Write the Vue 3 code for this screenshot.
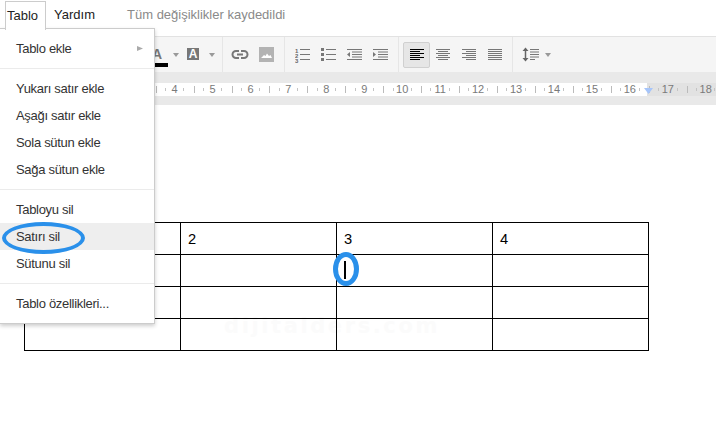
<script setup>
const menuGroups = [
  [{ label: 'Tablo ekle', sub: true }],
  [{ label: 'Yukarı satır ekle' }, { label: 'Aşağı satır ekle' }, { label: 'Sola sütun ekle' }, { label: 'Sağa sütun ekle' }],
  [{ label: 'Tabloyu sil' }, { label: 'Satırı sil', hover: true }, { label: 'Sütunu sil' }],
  [{ label: 'Tablo özellikleri...' }],
]
const rulerNumbers = Array.from({ length: 15 }, (_, i) => i + 4)
const rows = [['', '2', '3', '4'], ['', '', '', ''], ['', '', '', ''], ['', '', '', '']]
const ys = [2.5, 4.5, 6.5, 8.5, 10.5, 12.5]
const lineSets = {
  left: { color: '#000', d: ys.map((y, i) => `M1 ${y}h${i % 2 ? 10 : 14}`).join('') },
  center: { color: '#777', d: ys.map((y, i) => (i % 2 ? `M3 ${y}h10` : `M1 ${y}h14`)).join('') },
  right: { color: '#777', d: ys.map((y, i) => (i % 2 ? `M5 ${y}h10` : `M1 ${y}h14`)).join('') },
  justify: { color: '#777', d: ys.map((y) => `M1 ${y}h14`).join('') },
}
</script>

<template>
  <div class="page">
    <div class="menubar">
      <div class="tab">Tablo</div>
      <div class="menubar-item">Yardım</div>
      <div class="status">Tüm değişiklikler kaydedildi</div>
    </div>

    <div class="toolbar">
      <div class="group g1">
        <div class="text-color">A</div>
        <i class="caret"></i>
        <div class="highlight">A</div>
        <i class="caret"></i>
      </div>
      <div class="group g2">
        <svg width="18" height="16" viewBox="0 0 18 16" fill="none" stroke="#777" stroke-width="2">
          <path d="M8 4H5a3.5 3.5 0 0 0 0 7h3M10 4h3a3.5 3.5 0 0 1 0 7h-3M6 7.5h6" />
        </svg>
        <svg width="15" height="15" viewBox="0 0 15 15">
          <rect width="15" height="15" fill="#b3b3b3" />
          <path d="M2 11l3-3 1.5 1L8 6.5 10 9l1.5-1L13 11z" fill="#fff" />
        </svg>
      </div>
      <div class="group g3">
        <svg width="15" height="16" viewBox="0 0 15 16">
          <text x="0" y="6" class="num">1</text>
          <text x="0" y="11" class="num">2</text>
          <text x="0" y="16" class="num">3</text>
          <path d="M5 2.5h10M5 7.5h10M5 12.5h10" stroke="#777" fill="none" />
        </svg>
        <svg width="15" height="16" viewBox="0 0 15 16">
          <path d="M0 1h3v3H0zM0 6h3v3H0zM0 11h3v3H0z" fill="#777" />
          <path d="M5 2.5h10M5 7.5h10M5 12.5h10" stroke="#777" fill="none" />
        </svg>
        <svg width="15" height="16" viewBox="0 0 15 16">
          <path d="M0 2.5h15M5 5h10M5 7.5h10M5 10h10M0 12.5h15" stroke="#777" fill="none" />
          <path d="M3 5v5L0 7.5z" fill="#777" />
        </svg>
        <svg width="15" height="16" viewBox="0 0 15 16">
          <path d="M0 2.5h15M5 5h10M5 7.5h10M5 10h10M0 12.5h15" stroke="#777" fill="none" />
          <path d="M0 5v5l3-2.500z" fill="#777" />
        </svg>
      </div>
      <div class="group g4">
        <div v-for="(set, name) in lineSets" :key="name" class="align" :class="{ active: name === 'left' }">
          <svg width="16" height="16" viewBox="0 0 16 16" fill="none" :stroke="set.color">
            <path :d="set.d" />
          </svg>
        </div>
      </div>
      <div class="group g5">
        <svg width="17" height="16" viewBox="0 0 17 16">
          <path d="M3.500 3v9" stroke="#666" stroke-width="1.500" fill="none" />
          <path d="M0.500 4l3-3.500 3 3.500zM0.500 11l3 3.500 3-3.500z" fill="#666" />
          <path d="M8 2.500h9M8 5h9M8 7.500h9M8 10h9M8 12.500h5" stroke="#777" fill="none" />
        </svg>
        <i class="caret"></i>
      </div>
    </div>

    <div class="ruler-band">
      <div class="ruler">
        <div v-for="n in rulerNumbers" :key="n" class="ruler-cell">{{ n }}</div>
      </div>
      <svg class="margin-mark" width="9" height="6" viewBox="0 0 9 6"><path d="M0 0h9L4.500 6z" fill="#a6c5fa" /></svg>
    </div>

    <div class="watermark">dijitalders.com</div>

    <div class="doc">
      <table class="sheet">
        <tbody>
          <tr v-for="(row, r) in rows" :key="r">
            <td v-for="(cell, c) in row" :key="c">{{ cell }}</td>
          </tr>
        </tbody>
      </table>
    </div>

    <div class="caret-line"></div>
    <div class="ring ring-cursor"></div>

    <div class="menu">
      <template v-for="(group, g) in menuGroups" :key="g">
        <div v-if="g > 0" class="sep"></div>
        <div v-for="item in group" :key="item.label" class="item" :class="{ hover: item.hover }">
          <span>{{ item.label }}</span>
          <svg v-if="item.sub" width="6" height="5" viewBox="0 0 6 5"><path d="M0 0l6 2.500L0 5z" fill="#aaa" /></svg>
        </div>
      </template>
    </div>
    <div class="ring ring-menu"></div>
  </div>
</template>

<style scoped>
.page {
  position: relative;
  width: 716px;
  height: 446px;
  overflow: hidden;
  background: #fff;
  font-family: "Liberation Sans", Arial, sans-serif;
  font-size: 13px;
  color: #333;
}
.menubar {
  display: flex;
  height: 36px;
  padding-left: 5px;
  box-sizing: border-box;
  line-height: 28px;
}
.tab {
  position: relative;
  z-index: 3;
  height: 28px;
  margin-top: 1px;
  padding: 0 7px 0 1px;
  border: 1px solid #ccc;
  border-bottom: 0;
  background: #fff;
  color: #222;
  line-height: 27px;
}
.menubar-item {
  padding: 1px 0 0 8px;
  color: #222;
}
.status {
  margin-left: 32px;
  padding-top: 1px;
  color: #8a8a8a;
}
.toolbar {
  display: flex;
  height: 36px;
  box-sizing: border-box;
  padding-bottom: 1px;
  border-top: 1px solid #e2e2e2;
  background: #f5f5f5;
}
.group {
  display: flex;
  align-items: center;
  height: 35px;
  box-sizing: border-box;
  border-right: 1px solid #e6e6e6;
}
.g1 { width: 223px; padding-left: 152px; }
.g2 { width: 62px; padding-left: 8px; gap: 10px; }
.g3 { width: 114px; padding-left: 10px; gap: 11px; }
.g4 { width: 114px; padding-left: 4px; }
.g5 { padding-left: 9px; border-right: 0; }
.text-color {
  width: 16px;
  height: 20px;
  margin-top: 4px;
  box-sizing: border-box;
  border-bottom: 4px solid #000;
  color: #777;
  font-weight: bold;
  font-size: 14px;
  line-height: 15px;
  text-align: left;
}
.highlight {
  width: 12px;
  height: 12px;
  margin-left: 8px;
  margin-top: -1px;
  background: #777;
  color: #fff;
  font-weight: bold;
  font-size: 12px;
  line-height: 13px;
  text-align: center;
}
.caret {
  display: block;
  width: 0;
  height: 0;
  margin-left: 5px;
  border: 3px solid transparent;
  border-top: 4px solid #999;
  border-bottom: 0;
}
.g1 .caret:nth-child(4) { margin-left: 10px; }
.g5 .caret { margin-left: 6px; }
.num {
  font-size: 6px;
  font-weight: bold;
  fill: #666;
  font-family: "Liberation Sans", Arial, sans-serif;
}
.align {
  display: flex;
  align-items: center;
  justify-content: center;
  width: 26px;
  height: 26px;
  box-sizing: border-box;
}
.align.active {
  background: #e6e6e6;
  border: 1px solid #d0d0d0;
  border-radius: 2px;
  width: 27px;
}
.ruler-band {
  position: relative;
  height: 33px;
  padding-top: 11px;
  box-sizing: border-box;
  background: #e9e9e9;
  overflow: hidden;
}
.ruler {
  display: flex;
  height: 13px;
  padding-left: 155.650px;
  background: linear-gradient(to right, #fff 0, #fff 647px, #e2e2e2 647px);
}
.ruler-cell {
  flex: 0 0 37.950px;
  text-align: center;
  line-height: 13px;
  font-size: 11px;
  color: #7a7a7a;
  background:
    linear-gradient(#bbb, #bbb) 0 center / 1px 7px no-repeat,
    linear-gradient(#c4c4c4, #c4c4c4) 25% center / 1px 3px no-repeat,
    linear-gradient(#c4c4c4, #c4c4c4) 75% center / 1px 3px no-repeat;
}
.margin-mark {
  position: absolute;
  left: 644px;
  top: 16px;
}
.doc {
  position: relative;
  padding: 117px 0 0 24px;
}
.sheet {
  width: 625px;
  table-layout: fixed;
  border-collapse: collapse;
  font-size: 14.670px;
  color: #000;
}
.sheet td {
  height: 32px;
  box-sizing: border-box;
  padding: 0 7px;
  border: 1px solid #000;
}
.watermark {
  position: absolute;
  left: 224px;
  top: 314px;
  font-family: "DejaVu Sans", sans-serif;
  font-size: 21px;
  font-weight: bold;
  letter-spacing: 2.600px;
  color: #fbfbfb;
}
.caret-line {
  position: absolute;
  left: 344px;
  top: 261px;
  width: 2px;
  height: 18px;
  background: #000;
}
.ring {
  position: absolute;
  box-sizing: border-box;
  border: 4px solid #2a90ea;
  border-radius: 50%;
  z-index: 5;
}
.ring-menu {
  left: 2px;
  top: 222px;
  width: 83px;
  height: 32px;
}
.ring-cursor {
  left: 333px;
  top: 252px;
  width: 26px;
  height: 34px;
  border-width: 5px;
}
.menu {
  position: absolute;
  z-index: 2;
  left: 0;
  top: 28px;
  width: 155px;
  height: 296px;
  box-sizing: border-box;
  padding-top: 6px;
  background: #fff;
  border: 1px solid #ccc;
  border-left: 0;
  box-shadow: 0 2px 4px rgba(0, 0, 0, 0.2);
}
.sep {
  height: 1px;
  margin: 6px 0;
  background: #ebebeb;
}
.item {
  display: flex;
  align-items: center;
  justify-content: space-between;
  height: 27px;
  padding: 0 11px 0 16px;
  letter-spacing: -0.3px;
}
.item.hover {
  background: #eeeeee;
}
</style>
